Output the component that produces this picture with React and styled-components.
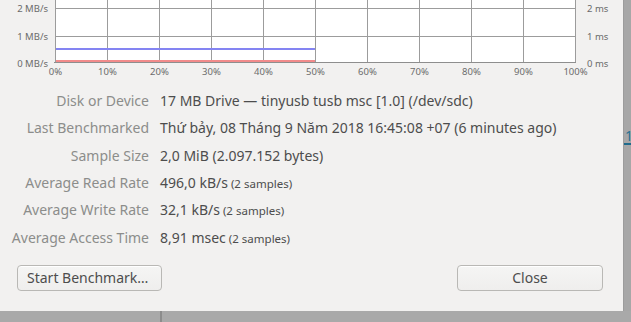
import styled, { createGlobalStyle } from 'styled-components';

const GlobalStyle = createGlobalStyle`
    html, body {
        margin: 0;
        padding: 0;
        background: #a9a9a9;
        overflow: hidden;
    }
    body {
        font-family: "Noto Sans", "Open Sans", sans-serif;
    }
`;

const Screen = styled.div`
    width: 631px;
    height: 322px;
    display: flex;
    flex-direction: column;
`;

const TopArea = styled.div`
    display: flex;
    height: 311px;
`;

const Dialog = styled.div`
    width: 623px;
    background: #f2f1f0;
    display: flex;
    flex-direction: column;
`;

const SideStrip = styled.div`
    flex: 1;
    background: #a7a7a7;
    border-left: 1px solid #9c9c9c;
    padding-top: 129px;
    overflow: hidden;
`;

const PageLink = styled.div`
    font-size: 14px;
    line-height: 14px;
    height: 14px;
    color: #2a7191;
    border-bottom: 2px solid #1f6b8c;
    width: 7px;
    padding-left: 1px;
    overflow: hidden;
`;

const BottomStrip = styled.div`
    flex: 1;
    display: flex;
    background: #a9a9a9;
`;

const StripCell = styled.div`
    width: ${p => p.$w}px;
    border-right: ${p => (p.$divider ? '2px solid #8c8c8c' : 'none')};
`;

const ChartBox = styled.div`
    height: 87px;
`;

const InfoGrid = styled.div`
    display: grid;
    grid-template-columns: 149px 1fr;
    column-gap: 11px;
    grid-auto-rows: 27.3px;
    align-items: center;
    font-size: 14px;
`;

const Label = styled.div`
    text-align: right;
    color: #8c8d8b;
    white-space: nowrap;
`;

const Value = styled.div`
    color: #4d4d4d;
    white-space: nowrap;
`;

const Small = styled.span`
    font-size: 11.5px;
`;

const Footer = styled.div`
    display: flex;
    justify-content: space-between;
    padding: 14px 20px 0 17px;
`;

const Button = styled.button`
    width: ${p => p.$w}px;
    height: 26px;
    border: 1px solid #b9b8b5;
    border-radius: 4px;
    background: linear-gradient(#f5f5f4, #efeeed);
    color: #4d4d4d;
    font-family: inherit;
    font-size: 14px;
    white-space: nowrap;
    text-align: ${p => (p.$center ? 'center' : 'left')};
    padding: 0 9px;
    box-shadow: inset 0 1px 0 #ffffff;
`;

const grid = '#9c9c9c';
const xs = Array.from({ length: 11 }, (_, i) => 55 + i * 52);

const Chart = () => (
    <svg width="623" height="87" fontFamily="Noto Sans, sans-serif" fontSize="9.5" fill="#6b6b6b">
        <rect x="55" y="-1" width="520" height="63.5" fill="#ffffff" />
        {xs.map(x => (
            <line key={x} x1={x + 0.5} y1="-1" x2={x + 0.5} y2="62.5" stroke={grid} />
        ))}
        <line x1="55" y1="8.5" x2="575" y2="8.5" stroke={grid} />
        <line x1="55" y1="36.5" x2="575" y2="36.5" stroke={grid} />
        <line x1="54" y1="62.5" x2="576" y2="62.5" stroke="#8e8e8e" />
        <rect x="56" y="48" width="259" height="2" fill="#8484f2" />
        <rect x="56" y="60" width="259" height="2" fill="#f28b8b" />
        <text x="48" y="12" textAnchor="end">2 MB/s</text>
        <text x="48" y="40" textAnchor="end">1 MB/s</text>
        <text x="48" y="67" textAnchor="end">0 MB/s</text>
        <text x="587" y="12">2 ms</text>
        <text x="587" y="40">1 ms</text>
        <text x="587" y="67">0 ms</text>
        {xs.map((x, i) => (
            <text key={i} x={x + 0.5} y="75" textAnchor="middle">{i * 10}%</text>
        ))}
    </svg>
);

const rows = [
    ['Disk or Device', '17 MB Drive — tinyusb tusb msc [1.0] (/dev/sdc)'],
    ['Last Benchmarked', 'Thứ bảy, 08 Tháng 9 Năm 2018 16:45:08 +07 (6 minutes ago)'],
    ['Sample Size', '2,0 MiB (2.097.152 bytes)'],
    ['Average Read Rate', '496,0 kB/s', '(2 samples)'],
    ['Average Write Rate', '32,1 kB/s', '(2 samples)'],
    ['Average Access Time', '8,91 msec', '(2 samples)'],
];

const App = () => {
    return (
        <>
            <GlobalStyle />
            <Screen>
                <TopArea>
                    <Dialog>
                        <ChartBox>
                            <Chart />
                        </ChartBox>
                        <InfoGrid>
                            {rows.flatMap(([label, value, extra]) => [
                                <Label key={label}>{label}</Label>,
                                <Value key={label + 'v'}>
                                    {value}
                                    {extra && <Small> {extra}</Small>}
                                </Value>,
                            ])}
                        </InfoGrid>
                        <Footer>
                            <Button $w={145}>Start Benchmark…</Button>
                            <Button $w={146} $center>Close</Button>
                        </Footer>
                    </Dialog>
                    <SideStrip>
                        <PageLink>1</PageLink>
                    </SideStrip>
                </TopArea>
                <BottomStrip>
                    <StripCell $w={160} $divider />
                    <StripCell $w={469} />
                </BottomStrip>
            </Screen>
        </>
    );
}

export default App;
